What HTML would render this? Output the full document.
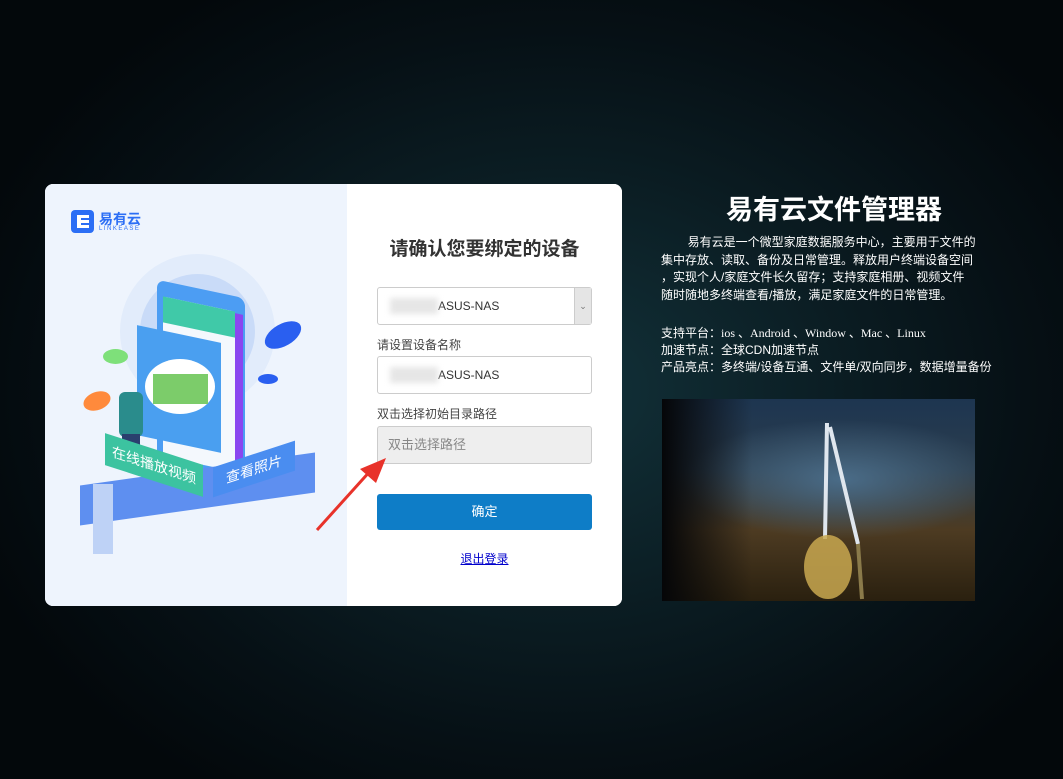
<!DOCTYPE html>
<html><head><meta charset="utf-8"><style>
*{margin:0;padding:0;box-sizing:border-box}
body{width:1063px;height:779px;overflow:hidden;position:relative;font-family:"Liberation Sans","Noto Sans CJK SC",sans-serif;
background:radial-gradient(ellipse 620px 480px at 560px 390px,#12323a 0%,#0b1d23 45%,#061015 75%,#03080b 100%);}
.card{position:absolute;left:45px;top:184px;width:577px;height:422px;border-radius:8px;overflow:hidden;background:#fff}
.left{position:absolute;left:0;top:0;width:302px;height:422px;background:#eef4fd}
.right{position:absolute;left:302px;top:0;width:275px;height:422px;background:#fff}
.abs{position:absolute}
.h{left:0;width:275px;text-align:center;top:50px;font-size:19px;font-weight:bold;color:#333}
.inp{position:absolute;left:30px;width:215px;height:38px;border:1px solid #ccc;border-radius:3px;font-size:12px;color:#333;padding-left:60px;line-height:36px}
.lbl{position:absolute;left:30px;font-size:12px;color:#444}
.blur{position:absolute;left:12px;top:10px;width:48px;height:16px;background:#e6e6e6;filter:blur(3px)}
</style></head><body>
<div class="card">
 <div class="left">
  <div class="abs" style="left:26px;top:26px;width:23px;height:23px;background:#2b6ef5;border-radius:4px"></div>
  <div class="abs" style="left:32px;top:31px;width:4px;height:13px;background:#fff"></div>
  <div class="abs" style="left:36px;top:31px;width:8px;height:3px;background:#fff"></div>
  <div class="abs" style="left:36px;top:36px;width:8px;height:3px;background:#fff"></div>
  <div class="abs" style="left:36px;top:41px;width:8px;height:3px;background:#fff"></div>
  <div class="abs" style="left:54px;top:25px;font-size:14px;font-weight:bold;color:#2b6ef5">易有云</div>
  <div class="abs" style="left:54px;top:42px;font-size:6px;letter-spacing:1.5px;color:#2b6ef5">LINKEASE</div>
  <div class="abs" style="left:75px;top:70px;width:155px;height:155px;border-radius:50%;background:#e2ecfb"></div>
  <div class="abs" style="left:95px;top:90px;width:115px;height:115px;border-radius:50%;background:#c9dbf8"></div>
  <div class="abs" style="left:112px;top:105px;width:88px;height:185px;background:#4c9df3;border-radius:8px;transform:skewY(12deg)"></div>
  <div class="abs" style="left:118px;top:120px;width:72px;height:160px;background:#f4f8fd;border-radius:4px;transform:skewY(12deg)"></div>
  <div class="abs" style="left:118px;top:120px;width:72px;height:26px;background:#40c9a8;transform:skewY(12deg)"></div>
  <div class="abs" style="left:190px;top:130px;width:8px;height:150px;background:#8a46f0;transform:skewY(12deg)"></div>
  <div class="abs" style="left:92px;top:150px;width:84px;height:110px;background:#4a9ff0;transform:skewY(12deg)"></div>
  <div class="abs" style="left:100px;top:175px;width:70px;height:55px;border-radius:50%;background:#fff"></div>
  <div class="abs" style="left:108px;top:190px;width:55px;height:30px;background:#7ccc6a"></div>
  <div class="abs" style="left:74px;top:208px;width:24px;height:45px;background:#2a8c8c;border-radius:6px"></div>
  <div class="abs" style="left:77px;top:250px;width:18px;height:30px;background:#2a3f6e"></div>
  <div class="abs" style="left:35px;top:285px;width:235px;height:40px;background:#5e8ff0;transform:skewY(-8deg)"></div>
  <div class="abs" style="left:60px;top:265px;width:98px;height:32px;background:#3cc3a0;transform:skewY(18deg);color:#fff;font-size:14px;text-align:center;line-height:32px">在线播放视频</div>
  <div class="abs" style="left:168px;top:270px;width:82px;height:30px;background:#4a8df0;transform:skewY(-18deg);color:#fff;font-size:14px;text-align:center;line-height:30px">查看照片</div>
  <div class="abs" style="left:218px;top:140px;width:40px;height:22px;border-radius:50%;background:#2a5ff0;transform:rotate(-30deg)"></div>
  <div class="abs" style="left:213px;top:190px;width:20px;height:10px;border-radius:50%;background:#2a5ff0"></div>
  <div class="abs" style="left:58px;top:165px;width:25px;height:15px;border-radius:50%;background:#7ee07a"></div>
  <div class="abs" style="left:38px;top:208px;width:28px;height:18px;border-radius:50%;background:#ff8a3c;transform:rotate(-20deg)"></div>
  <div class="abs" style="left:48px;top:300px;width:20px;height:70px;background:#bed2f6"></div>
 </div>
 <div class="right">
  <div class="abs h">请确认您要绑定的设备</div>
  <div class="inp" style="top:103px;height:38px"><div class="blur"></div>ASUS-NAS<div class="abs" style="right:0;top:0;width:17px;height:36px;background:#e5e5e5;border-left:1px solid #ccc;font-size:9px;text-align:center;color:#777">⌄</div></div>
  <div class="lbl" style="top:152px">请设置设备名称</div>
  <div class="inp" style="top:172px"><div class="blur"></div>ASUS-NAS</div>
  <div class="lbl" style="top:221px">双击选择初始目录路径</div>
  <div class="inp" style="top:242px;background:#eee;padding-left:10px;font-size:13px;color:#888">双击选择路径</div>
  <div class="abs" style="left:30px;top:310px;width:215px;height:36px;background:#0e7dc7;border-radius:3px;color:#fff;font-size:13px;text-align:center;line-height:36px">确定</div>
  <div class="abs" style="left:0;width:275px;top:366px;text-align:center;font-size:12px;color:#00c;text-decoration:underline">退出登录</div>
 </div>
</div>
<svg class="abs" style="left:312px;top:455px" width="80" height="80"><line x1="5" y1="75" x2="60" y2="14" stroke="#e8322a" stroke-width="3"/><polygon points="74,3 48,14 64,28" fill="#e8322a"/></svg>
<div class="abs" style="left:664px;top:188px;width:340px;text-align:center;font-size:27px;font-weight:bold;color:#fff">易有云文件管理器</div>
<div class="abs" style="left:661px;top:234px;width:360px;font-size:12px;line-height:17.5px;color:#fff;white-space:nowrap">&nbsp;&nbsp;&nbsp;&nbsp;&nbsp;&nbsp;&nbsp;&nbsp;易有云是一个微型家庭数据服务中心，主要用于文件的<br>集中存放、读取、备份及日常管理。释放用户终端设备空间<br>，实现个人/家庭文件长久留存；支持家庭相册、视频文件<br>随时随地多终端查看/播放，满足家庭文件的日常管理。</div>
<div class="abs" style="left:661px;top:325px;width:340px;font-size:12px;line-height:17px;color:#fff;white-space:nowrap">支持平台：<span style="font-family:'Liberation Serif',serif">ios 、Android 、Window 、Mac 、Linux</span><br>加速节点：全球CDN加速节点<br>产品亮点：多终端/设备互通、文件单/双向同步，数据增量备份</div>
<div class="abs" style="left:662px;top:399px;width:313px;height:202px;background:radial-gradient(ellipse 160px 60px at 180px 80px,#4a6c88 0%,rgba(40,60,80,0) 100%),linear-gradient(180deg,#1d3550 0%,#2c3e4e 35%,#4d3b22 65%,#2a200f 100%)"></div>
<div class="abs" style="left:662px;top:399px;width:90px;height:202px;background:linear-gradient(90deg,#050608,rgba(5,6,8,0))"></div>
<svg class="abs" style="left:662px;top:399px" width="313" height="202"><path d="M165 24 L163 140 M168 28 L196 145" stroke="#dfe6ee" stroke-width="4" fill="none"/><ellipse cx="166" cy="168" rx="24" ry="32" fill="#c9a850" opacity=".85"/><line x1="196" y1="145" x2="200" y2="200" stroke="#8a7a4a" stroke-width="4"/></svg>
</body></html>
